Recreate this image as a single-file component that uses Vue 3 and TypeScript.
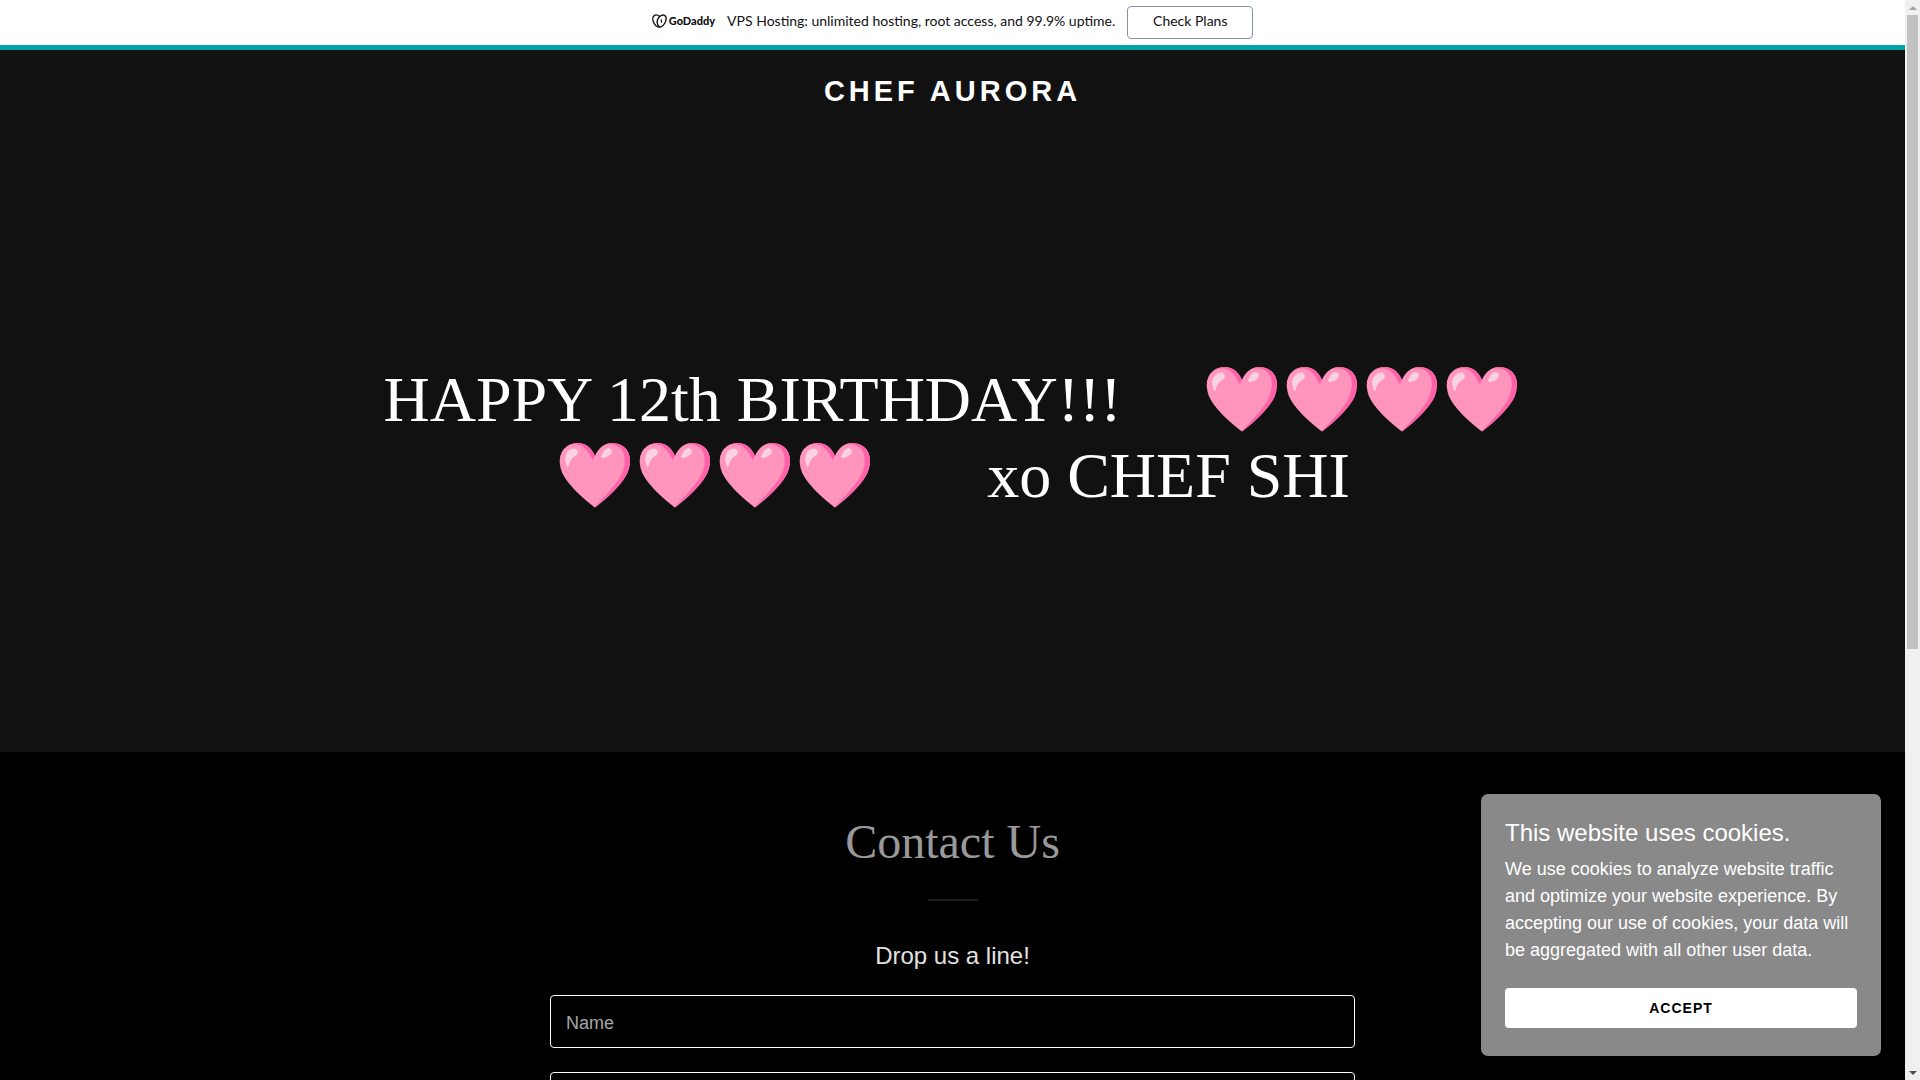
<script setup lang="ts">
import { ref } from 'vue'

const name = ref('')
const email = ref('')
const showCookies = ref(true)

const hearts = '🩷🩷🩷🩷'
const gap = (n: number): string => '\u00a0'.repeat(n)
const heroLines: string[] = [
  `HAPPY 12th BIRTHDAY!!!${gap(5)}${hearts}`,
  `${hearts}${gap(7)}xo CHEF SHI`,
]
</script>

<template>
  <div class="shell">
    <div class="page">
      <aside class="promo">
        <a class="brand" href="#" aria-label="GoDaddy">
          <svg class="mark" viewBox="0 0 15 14" fill="none" stroke="#111" stroke-width="1.4" stroke-linecap="round">
            <path d="M5.4 9.600C4.500 6.400 6.400 2.600 9.400 1.300c2.300-1 4.500.300 4.700 2.800.3 3.200-2.100 7.600-5.200 8.700-1.700.500-3-.600-3.500-3.200Z" />
            <path d="M7.400 2.300C5.600.8 3.600.600 2.200 1.600.4 2.900.4 6.200 1.900 9c1.300 2.500 3.500 4.200 5.500 4" />
            <path d="M9.400 8.200V5.800" stroke-width="1.200" />
          </svg>
          <span class="wordmark">GoDaddy</span>
        </a>
        <span class="offer">VPS Hosting: unlimited hosting, root access, and 99.9% uptime.</span>
        <button class="plans" type="button">Check Plans</button>
      </aside>

      <header class="hero">
        <a class="site-name" href="#">CHEF AURORA</a>
        <h1 class="greeting">
          <span v-for="line in heroLines" :key="line" class="line">{{ line }}</span>
        </h1>
      </header>

      <main class="contact">
        <h2 class="heading">Contact Us</h2>
        <hr class="rule" />
        <form class="form" @submit.prevent>
          <h3 class="form-title">Drop us a line!</h3>
          <input v-model="name" class="field" type="text" placeholder="Name" aria-label="Name" />
          <input v-model="email" class="field" type="email" aria-label="Email" />
        </form>
      </main>
    </div>

    <div class="scrollbar" aria-hidden="true">
      <span class="arrow up"></span>
      <span class="track"><span class="thumb"></span></span>
      <span class="arrow down"></span>
    </div>

    <section v-if="showCookies" class="cookies">
      <h4 class="cookies-title">This website uses cookies.</h4>
      <p class="cookies-text">
        We use cookies to analyze website traffic and optimize your website experience. By accepting our use of
        cookies, your data will be aggregated with all other user data.
      </p>
      <button class="accept" type="button" @click="showCookies = false">ACCEPT</button>
    </section>
  </div>
</template>

<style>
body {
  margin: 0;
  background: #000;
}
</style>

<style scoped>
.shell {
  display: flex;
  height: 100vh;
  overflow: hidden;
  font-family: "Liberation Sans", Arial, sans-serif;
}
.page {
  flex: 1;
  min-width: 0;
  overflow: hidden;
}
.promo {
  display: flex;
  align-items: center;
  justify-content: center;
  box-sizing: border-box;
  height: 50px;
  border-bottom: 5px solid #00a4a6;
  background: #fff;
  color: #111;
  font-family: Lato, sans-serif;
  font-size: 14px;
}
.brand {
  display: flex;
  align-items: center;
  gap: 2px;
  margin-right: 12px;
  padding-bottom: 4px;
  color: #111;
  text-decoration: none;
}
.mark {
  width: 15px;
  height: 14px;
}
.wordmark {
  font-size: 11px;
  font-weight: 900;
}
.offer {
  padding-bottom: 4px;
}
.plans {
  box-sizing: border-box;
  width: 126px;
  height: 33px;
  margin-left: 12px;
  padding: 0 0 4px;
  border: 1px solid #8294ac;
  border-radius: 4px;
  background: #fff;
  color: #111;
  font: inherit;
}
.hero {
  display: flex;
  flex-direction: column;
  align-items: center;
  height: 702px;
  background: #111;
  color: #fff;
}
.site-name {
  margin-top: 24px;
  color: #fff;
  font-size: 29px;
  font-weight: 700;
  line-height: 34px;
  letter-spacing: 4px;
  text-decoration: none;
}
.greeting {
  margin: auto 0;
  padding-top: 16px;
  font-family: "Liberation Serif", "Times New Roman", serif;
  font-size: 64px;
  font-weight: 400;
  line-height: 76px;
  text-align: center;
}
.line {
  display: block;
  height: 76px;
  white-space: nowrap;
}
.contact {
  display: flex;
  flex-direction: column;
  align-items: center;
  padding-top: 60px;
}
.heading {
  margin: 0;
  color: #999;
  font-family: "Liberation Serif", "Times New Roman", serif;
  font-size: 48px;
  font-weight: 400;
  line-height: 60px;
}
.rule {
  width: 50px;
  height: 2px;
  margin: 27px 0 40px;
  border: 0;
  background: #1b1b1b;
}
.form {
  display: flex;
  flex-direction: column;
  gap: 24px;
  width: 805px;
  max-width: 90%;
}
.form-title {
  margin: 0;
  color: #e2e2e2;
  font-size: 24px;
  font-weight: 400;
  line-height: 30px;
  text-align: center;
}
.field {
  box-sizing: border-box;
  width: 100%;
  height: 53px;
  padding: 4px 15px 0;
  border: 1px solid #fff;
  border-radius: 4px;
  background: #000;
  color: #fff;
  font: inherit;
  font-size: 18px;
}
.field::placeholder {
  color: #a6a6a6;
  opacity: 1;
}
.scrollbar {
  display: flex;
  flex-direction: column;
  width: 15px;
  background: #f0f0f0;
}
.arrow {
  display: flex;
  align-items: center;
  justify-content: center;
  height: 15px;
}
.arrow::before {
  content: "";
  border: 4px solid transparent;
}
.up::before {
  border-top: 0;
  border-bottom-color: #a3a3a3;
}
.down::before {
  border-bottom: 0;
  border-top-color: #505050;
}
.track {
  flex: 1;
  padding: 0 2px;
}
.thumb {
  display: block;
  height: 60.4%;
  background: #c1c1c1;
}
.cookies {
  position: fixed;
  right: 39px;
  bottom: 24px;
  box-sizing: border-box;
  width: 400px;
  padding: 24px 24px 28px;
  border-radius: 7px;
  background: #898989;
  color: #fff;
}
.cookies-title {
  margin: 0 0 8px;
  font-size: 24px;
  font-weight: 400;
  line-height: 30px;
}
.cookies-text {
  margin: 0 0 24px;
  font-size: 18px;
  line-height: 27px;
}
.accept {
  width: 100%;
  height: 40px;
  padding: 0;
  border: 0;
  border-radius: 4px;
  background: #fff;
  color: #000;
  font: inherit;
  font-size: 14px;
  font-weight: 700;
  letter-spacing: 1px;
}
</style>
